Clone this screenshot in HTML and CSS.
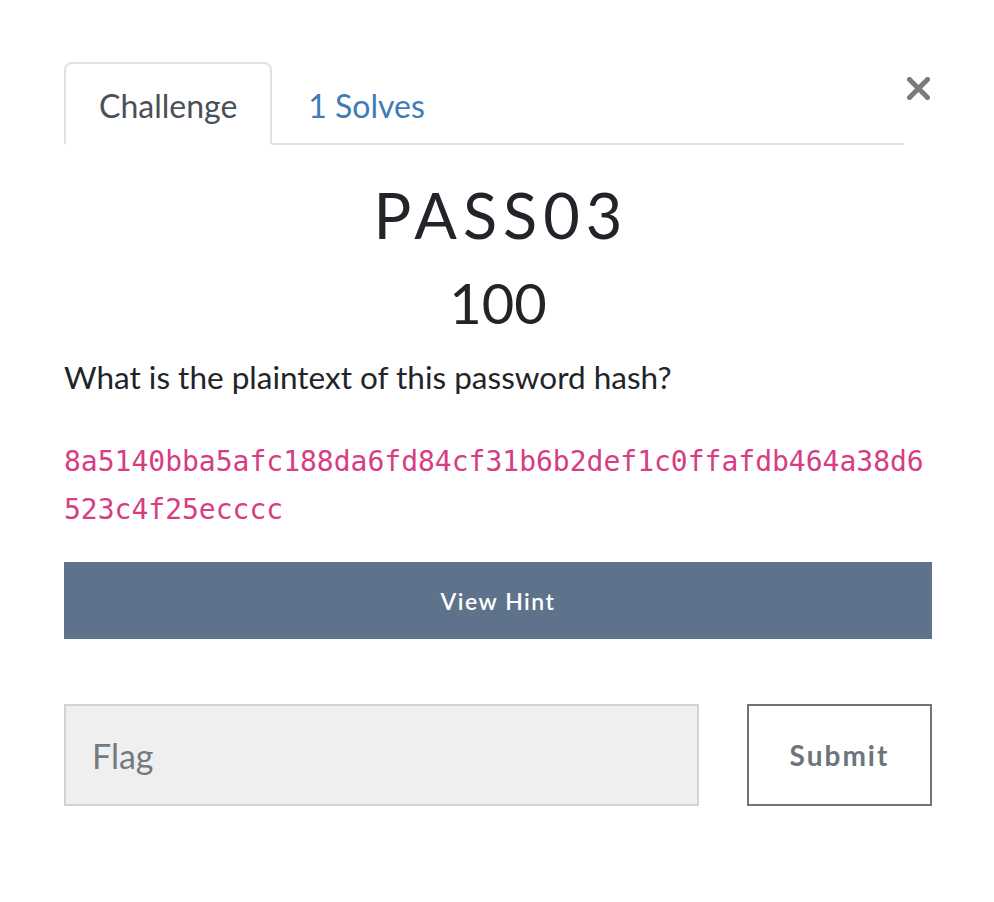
FILE: index.html
```html
<!DOCTYPE html>
<html lang="en">
<head>
<meta charset="utf-8">
<title>PASS03</title>
<link rel="stylesheet" href="styles.css">
</head>
<body>
<div class="modal">
  <div class="header">
    <ul class="tabs">
      <li class="tab active">Challenge</li>
      <li class="tab link">1 Solves</li>
    </ul>
    <button class="close" aria-label="Close">
      <svg width="23" height="23" viewBox="0 0 23 23"><path d="M2.5 2.5 L20.5 20.5 M20.5 2.5 L2.5 20.5" stroke="#7b7b7b" stroke-width="5" stroke-linecap="square"/></svg>
    </button>
  </div>
  <h2 class="name">PASS03</h2>
  <h3 class="value">100</h3>
  <p class="desc">What is the plaintext of this password hash?</p>
  <p class="hash">8a5140bba5afc188da6fd84cf31b6b2def1c0ffafdb464a38d6523c4f25ecccc</p>
  <button class="hint">View Hint</button>
  <div class="submit-row">
    <input class="flag" type="text" placeholder="Flag">
    <button class="submit">Submit</button>
  </div>
</div>
</body>
</html>
```

FILE: styles.css
```css
html, body {
  margin: 0;
  padding: 0;
  background: #ffffff;
}
body {
  font-family: Lato, "Open Sans", sans-serif;
  color: #212529;
}
.modal {
  width: 868px;
  margin-left: 64px;
  padding-top: 62px;
}
.header {
  display: flex;
  align-items: flex-start;
}
.tabs {
  list-style: none;
  margin: 0;
  padding: 0;
  width: 840px;
  display: flex;
  border-bottom: 2px solid #dee2e6;
}
.tab {
  font-size: 32px;
  line-height: 35px;
  padding: 24px 33px 20px;
  border: 2px solid transparent;
  border-radius: 8px 8px 0 0;
  margin-bottom: -2px;
}
.tab.active {
  color: #495057;
  border-color: #dee2e6 #dee2e6 #ffffff;
  background: #fff;
}
.tab.link {
  color: #3e7bb9;
  padding-left: 34px;
}
.close {
  border: 0;
  background: none;
  padding: 0;
  width: 23px;
  height: 23px;
  display: block;
  margin: 15px 0 0 3px;
}
.close svg { display: block; }
.name {
  margin: 32px 0 0 0;
  padding-left: 6px;
  text-align: center;
  font-weight: 400;
  font-size: 63px;
  line-height: 76px;
  letter-spacing: 6px;
  color: #212529;
}
.value {
  margin: 14px 0 0 0;
  text-align: center;
  font-weight: 400;
  font-size: 56px;
  line-height: 72px;
  color: #212529;
}
.desc {
  margin: 18px 0 0 0;
  font-size: 31.5px;
  line-height: 40px;
}
.hash {
  margin: 41px 0 0 0;
  font-family: "DejaVu Sans Mono", "Liberation Mono", monospace;
  font-size: 28px;
  line-height: 48px;
  color: #d63d82;
  word-break: break-all;
}
.hint {
  display: block;
  width: 100%;
  margin-top: 28px;
  height: 77px;
  border: 0;
  background: #5f728c;
  color: #ffffff;
  font-family: Lato, sans-serif;
  font-size: 23px;
  font-weight: 600;
  letter-spacing: 1.5px;
}
.submit-row {
  display: flex;
  justify-content: space-between;
  margin-top: 65px;
}
.flag {
  box-sizing: border-box;
  width: 635px;
  height: 102px;
  border: 2px solid #ced4da;
  background: #efefef;
  padding: 0 26px;
  font-family: Lato, sans-serif;
  font-size: 34px;
  color: #495057;
  outline: none;
}
.flag::placeholder {
  color: #737b82;
}
.submit {
  box-sizing: border-box;
  width: 185px;
  height: 102px;
  border: 2px solid #6c757d;
  background: #fff;
  color: #6c757d;
  font-family: Lato, sans-serif;
  font-size: 28px;
  font-weight: 700;
  letter-spacing: 2px;
}
```
